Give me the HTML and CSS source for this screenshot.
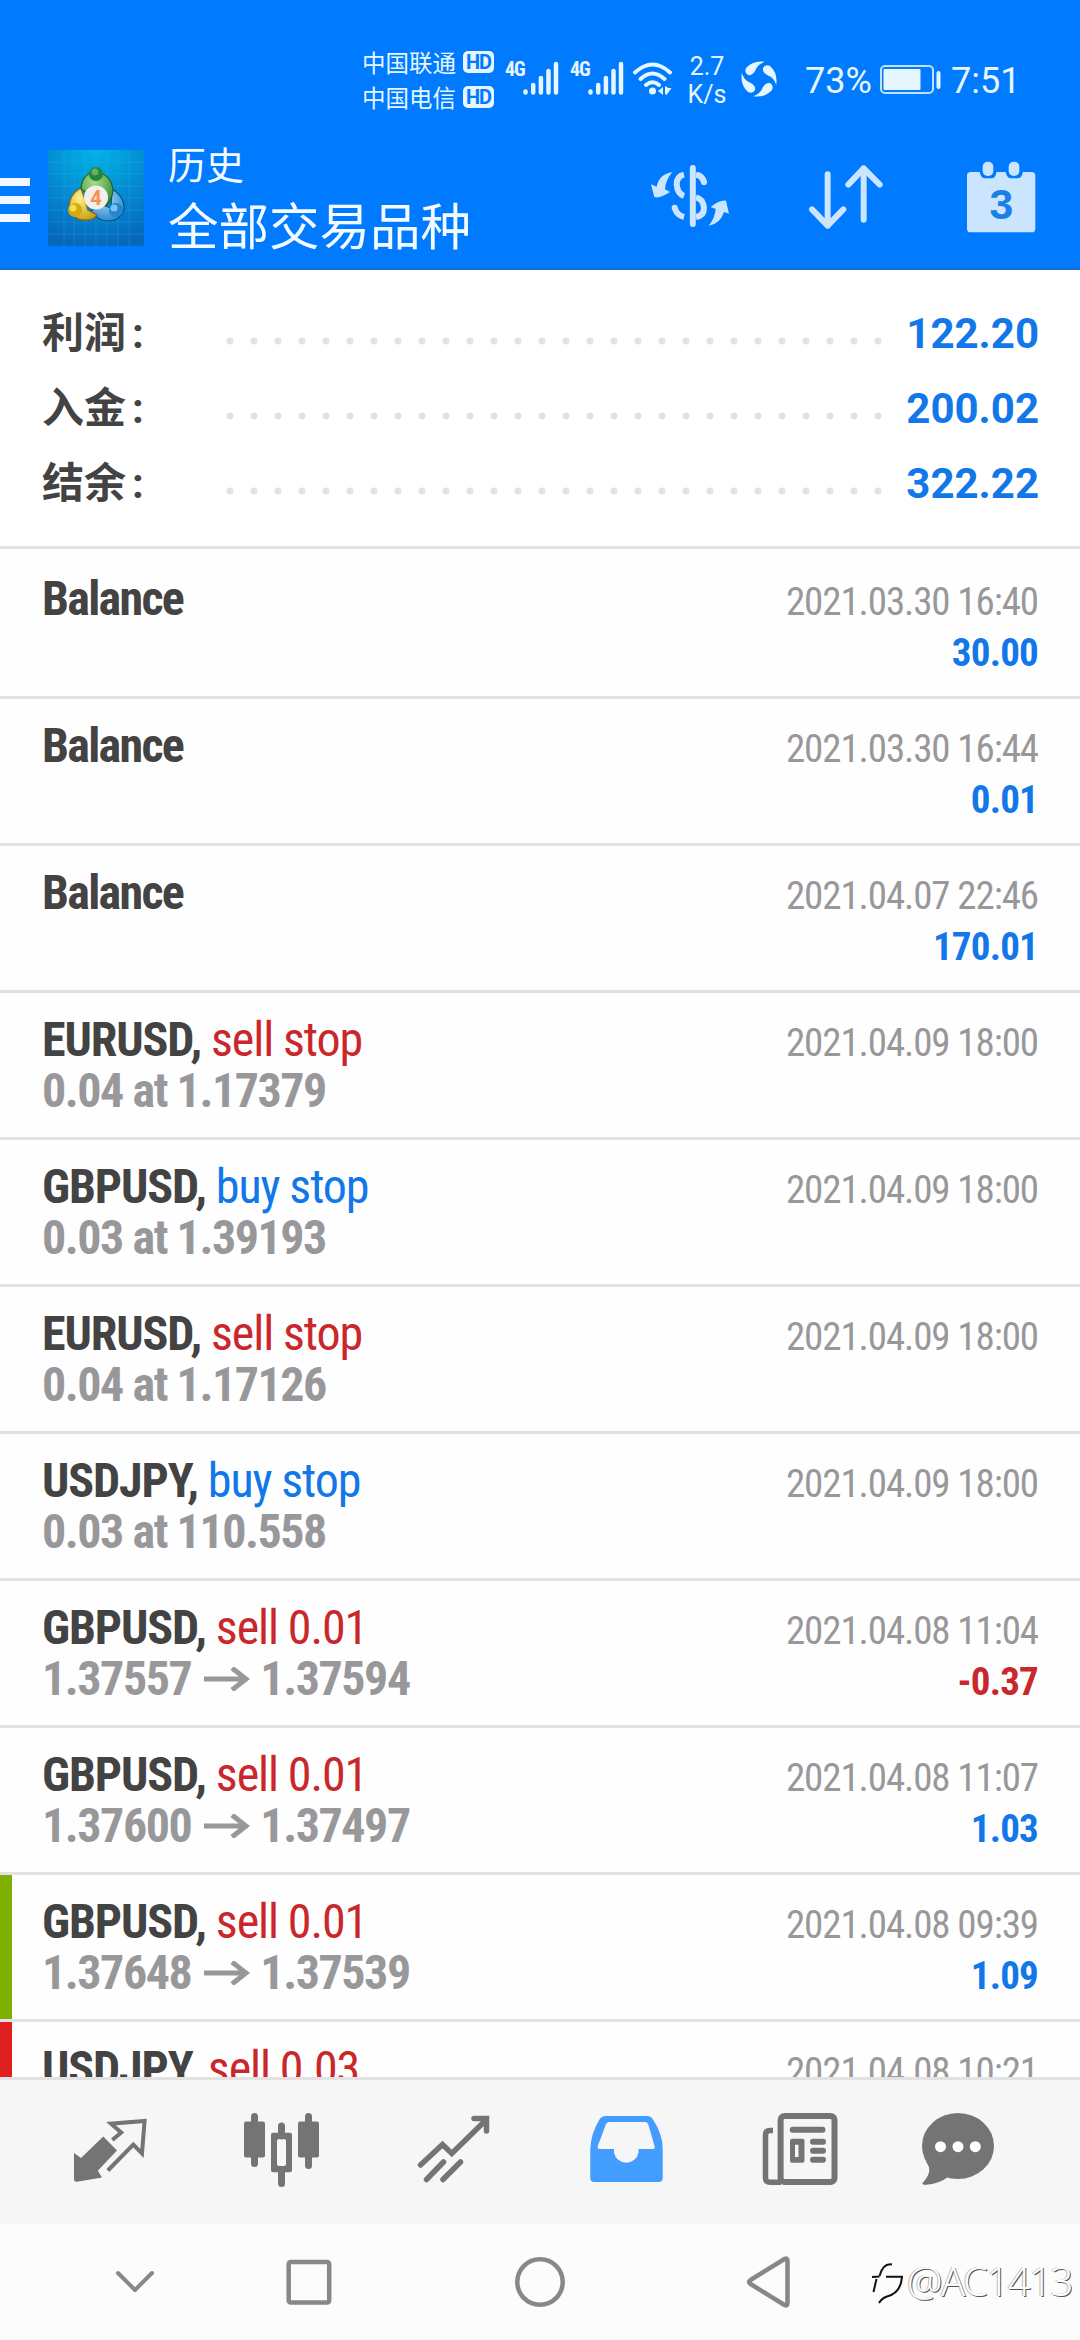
FILE: index.html
```html
<!DOCTYPE html>
<html lang="zh-CN">
<head>
<meta charset="utf-8">
<title>历史</title>
<link rel="stylesheet" href="styles.css">
</head>
<body>
<div class="screen">
  <div class="status">
    <div class="carriers">
      <div class="carrier"><span>中国联通</span><b class="hd">HD</b></div>
      <div class="carrier"><span>中国电信</span><b class="hd">HD</b></div>
    </div>
    <div class="signal"><b>4G</b><svg width="36" height="34" viewBox="0 0 36 34"><path d="M2.500 30.500v1M10.200 24v7.500M17.900 17v14.500M25.500 10v21.500M33 3v28.500"/></svg></div>
    <div class="signal"><b>4G</b><svg width="36" height="34" viewBox="0 0 36 34"><path d="M2.500 30.500v1M10.200 24v7.500M17.900 17v14.500M25.500 10v21.500M33 3v28.500"/></svg></div>
    <svg class="wifi" width="42" height="36" viewBox="0 0 42 36"><g fill="none" stroke="#e6f6ff" stroke-width="4" stroke-linecap="round"><path d="M3 11.500Q20.500-4.500 38 11.500M8.500 18Q20.500 7 32.500 18M14 24Q20.500 18.500 27 24"/></g><circle cx="20.500" cy="30" r="3.500"/><path d="M26 30l5-4v8zM33 25v8l1.500 1 5-7h-3z"/></svg>
    <div class="rate"><span>2.7</span><span>K/s</span></div>
    <svg class="swirl" width="36" height="36" viewBox="0 0 36 36"><path id="blade" d="M5 7Q12-1 24 .8Q17 3 15 8Q12 15 7 14Q3 12 5 7z"/><use href="#blade" transform="rotate(90 18 18)"/><use href="#blade" transform="rotate(180 18 18)"/><use href="#blade" transform="rotate(270 18 18)"/></svg>
    <span class="pct">73%</span>
    <svg class="battery" width="61" height="30" viewBox="0 0 61 30"><rect x="1" y="1" width="52" height="27" rx="4" fill="none" stroke="#bfe2ff" stroke-width="2"/><rect x="3.500" y="4" width="37" height="21" rx="1"/><rect x="56.500" y="6" width="4" height="18" rx="2"/></svg>
    <span class="time">7:51</span>
  </div>

  <div class="appbar">
    <div class="burger"><i></i><i></i><i></i></div>
    <svg class="logo" width="96" height="96" viewBox="0 0 96 96">
      <defs>
        <radialGradient id="bg" cx=".5" cy="0" r="1"><stop offset="0" stop-color="#00b4e8"/><stop offset="1" stop-color="#0668bd"/></radialGradient>
        <radialGradient id="gr" cx=".4" cy=".3" r=".8"><stop offset="0" stop-color="#a6dc8c"/><stop offset="1" stop-color="#2b8a2c"/></radialGradient>
        <radialGradient id="ye" cx=".4" cy=".3" r=".8"><stop offset="0" stop-color="#fff08a"/><stop offset="1" stop-color="#c49a10"/></radialGradient>
        <radialGradient id="bl" cx=".4" cy=".3" r=".8"><stop offset="0" stop-color="#a8dcfa"/><stop offset="1" stop-color="#1b7fc8"/></radialGradient>
      </defs>
      <rect width="96" height="96" fill="url(#bg)"/>
      <path d="M0 12h96M0 24h96M0 36h96M0 48h96M0 60h96M0 72h96M0 84h96M16 0v96M26 0v96M37 0v96M48 0v96M59 0v96M70 0v96M81 0v96" stroke="#48b8ee" stroke-opacity=".22"/>
      <g stroke-width="1.200">
        <path d="M64 39Q77 47 76 60Q72 71 60 71Q50 71 43 61L52 54L63 58z" fill="url(#bl)" stroke="#0a4f86"/>
        <path d="M33 38Q21 44 21 59Q26 71 38 70Q46 70 49 65L40 60L37 50z" fill="url(#ye)" stroke="#806a10"/>
        <path d="M33 39Q34 23 48 22Q63 24 65 40Q64 50 58 56L57 42L48 38L39 43z" fill="url(#gr)" stroke="#1f6424"/>
      </g>
      <circle cx="48" cy="24" r="7" fill="#258636"/><circle cx="47" cy="22" r="3.500" fill="#64b060"/>
      <circle cx="27" cy="60" r="7" fill="#d4a80e"/><circle cx="25" cy="58" r="3.500" fill="#f2dc50"/>
      <circle cx="68" cy="60" r="7" fill="#2386cf"/><circle cx="66" cy="58" r="3.500" fill="#7cc2f2"/>
      <circle cx="48" cy="47.500" r="12" fill="#f3eeec"/>
      <text x="48" y="54.500" text-anchor="middle" class="logo-num">4</text>
    </svg>
    <div class="titles"><div class="sub">历史</div><div class="main">全部交易品种</div></div>
    <svg class="act" width="80" height="66" viewBox="90 130 240 198">
      <path d="M218.500 145v168" class="ln"/>
      <path d="M192 165Q170 170 170 194Q172 222 192 229M164 264Q170 286 192 292M228 292Q252 288 252 265Q250 238 228 233M228 165Q248 168 252 188" class="ln flat"/>
      <circle cx="164" cy="264" r="9"/><circle cx="252" cy="188" r="9"/>
      <path d="M157 158Q118 162 110 201L93 194L103 232Q118 238 150 217L135 209Q137 180 157 158zM266 318Q302 312 312 277L327 282L318 243Q300 240 272 262L287 268Q285 295 266 318z"/>
    </svg>
    <svg class="act" width="76" height="66" viewBox="565 130 228 198"><path d="M624 164v154M577 269l47 49 47-49M732 300V146M686 195l46-49 48 49" class="ln"/></svg>
    <svg class="act" width="70" height="72" viewBox="1041 122 210 216">
      <path d="M1055 155H1082Q1086 174 1098 174H1118Q1130 174 1132 155H1160Q1164 174 1176 174H1196Q1208 174 1212 155H1238Q1249 155 1249 166V325Q1249 336 1238 336H1055Q1044 336 1044 325V166Q1044 155 1055 155z"/>
      <rect x="1091" y="124" width="32" height="43" rx="15"/><rect x="1169" y="124" width="32" height="43" rx="15"/>
      <text x="1147" y="297" text-anchor="middle" class="cal-num">3</text>
    </svg>
  </div>

  <div class="summary">
    <div class="sum"><span class="label">利润<span class="colon">:</span></span><span class="dots"></span><span class="val">122.20</span></div>
    <div class="sum"><span class="label">入金<span class="colon">:</span></span><span class="dots"></span><span class="val">200.02</span></div>
    <div class="sum"><span class="label">结余<span class="colon">:</span></span><span class="dots"></span><span class="val">322.22</span></div>
  </div>

  <div class="list">
    <div class="row"><div class="l"><div><b class="bal">Balance</b></div></div><div class="r"><div>2021.03.30 16:40</div><div class="amt">30.00</div></div></div>
    <div class="row"><div class="l"><div><b class="bal">Balance</b></div></div><div class="r"><div>2021.03.30 16:44</div><div class="amt">0.01</div></div></div>
    <div class="row"><div class="l"><div><b class="bal">Balance</b></div></div><div class="r"><div>2021.04.07 22:46</div><div class="amt">170.01</div></div></div>
    <div class="row"><div class="l"><div><b>EURUSD,</b> <span class="sell">sell stop</span></div><div class="px">0.04 at 1.17379</div></div><div class="r"><div>2021.04.09 18:00</div></div></div>
    <div class="row"><div class="l"><div><b>GBPUSD,</b> <span class="buy">buy stop</span></div><div class="px">0.03 at 1.39193</div></div><div class="r"><div>2021.04.09 18:00</div></div></div>
    <div class="row"><div class="l"><div><b>EURUSD,</b> <span class="sell">sell stop</span></div><div class="px">0.04 at 1.17126</div></div><div class="r"><div>2021.04.09 18:00</div></div></div>
    <div class="row"><div class="l"><div><b>USDJPY,</b> <span class="buy">buy stop</span></div><div class="px">0.03 at 110.558</div></div><div class="r"><div>2021.04.09 18:00</div></div></div>
    <div class="row"><div class="l"><div><b>GBPUSD,</b> <span class="sell">sell 0.01</span></div><div class="px">1.37557<svg class="arrow" width="46" height="24" viewBox="0 0 46 24"><path d="M0 12h41M28 1l14 11-14 11"/></svg>1.37594</div></div><div class="r"><div>2021.04.08 11:04</div><div class="amt neg">-0.37</div></div></div>
    <div class="row"><div class="l"><div><b>GBPUSD,</b> <span class="sell">sell 0.01</span></div><div class="px">1.37600<svg class="arrow" width="46" height="24" viewBox="0 0 46 24"><path d="M0 12h41M28 1l14 11-14 11"/></svg>1.37497</div></div><div class="r"><div>2021.04.08 11:07</div><div class="amt">1.03</div></div></div>
    <div class="row tp"><div class="l"><div><b>GBPUSD,</b> <span class="sell">sell 0.01</span></div><div class="px">1.37648<svg class="arrow" width="46" height="24" viewBox="0 0 46 24"><path d="M0 12h41M28 1l14 11-14 11"/></svg>1.37539</div></div><div class="r"><div>2021.04.08 09:39</div><div class="amt">1.09</div></div></div>
    <div class="row sl"><div class="l"><div><b>USDJPY,</b> <span class="sell">sell 0.03</span></div></div><div class="r"><div>2021.04.08 10:21</div></div></div>
  </div>

  <div class="tabs">
    <svg viewBox="24 0 172 144"><path d="M103.300 56.500L117 70.500L97.800 90.700L102 97.500L77 101.700Q74 102 74 99V73L81 78z"/><path d="M112.300 60L121.200 52.500L111 43.700L144.600 41L142 73.500L133.300 64.500L107.800 90.500" class="st" stroke-width="4"/></svg>
    <svg viewBox="196 0 172 144"><path d="M254.500 36.500v47M281.500 46v10M281.500 90v13.500M308.500 36.500v49" class="st" stroke-width="7" stroke-linecap="round"/><rect x="244" y="41.500" width="21" height="36" rx="2"/><rect x="298" y="41.500" width="21" height="36" rx="2"/><path fill-rule="evenodd" d="M273 52.700h17q2 0 2 2v35.500q0 2-2 2h-17q-2 0-2-2V54.700q0-2 2-2zM279 59q-2 0-2 2v23q0 2 2 2h5q2 0 2-2V61q0-2-2-2z"/></svg>
    <svg viewBox="368 0 172 144"><path d="M420.500 85L442.500 64.500L451.800 73.500L486 40M474 38.500H486.500V51M426.500 99.500L443.500 82M443 99.500L460.500 82" class="st" stroke-width="5.500" stroke-linecap="round"/></svg>
    <svg viewBox="540 0 172 144"><path fill="#429dff" fill-rule="evenodd" d="M606 36H647Q651 36 653 39.500Q662.700 54 662.700 69V98Q662.700 102 658.500 102H594.500Q590.300 102 590.300 98V69Q591 53 599.500 39.500Q601.500 36 606 36zM609.500 42Q607 42 606 44L598 65.500Q596.500 69 600 69H614V72.500A12.400 12 0 0 0 638.500 72.500V69H652.500Q655.500 69 654.500 66L648.500 45Q647.500 42 645 42z"/></svg>
    <svg viewBox="712 0 172 144"><rect x="780.600" y="36" width="53.900" height="66" rx="4" class="st" stroke-width="6"/><path d="M773 50.500H770Q765.500 50.500 765.500 55V98Q765.500 102.300 770 102.300H781" class="st" stroke-width="5.500"/><path d="M792.700 49.700h29.800M813 61.700h10M813 70.700h10M813 79.700h10" class="st" stroke-width="6" stroke-linecap="round"/><path fill-rule="evenodd" d="M792 58.700h10.500q2 0 2 2v20q0 2-2 2H792q-2 0-2-2v-20q0-2 2-2zM795 64.700V77h3.500V64.700z"/></svg>
    <svg viewBox="875 0 172 144"><ellipse cx="958" cy="66" rx="36" ry="33"/><path d="M926 82Q934 91 922.500 103Q922 105 926 104.700Q939 104 948 97L958 90z"/><g fill="#fff"><circle cx="940.500" cy="66.700" r="5.500"/><circle cx="958" cy="66.700" r="5.500"/><circle cx="975.300" cy="66.700" r="5.500"/></g></svg>
  </div>

  <div class="sysnav">
    <svg viewBox="54 0 140 116" class="hide"><path d="M118 49L135 66L152 49" stroke-width="4"/></svg>
    <svg viewBox="194 0 231 116"><rect x="288.700" y="37.900" width="40.500" height="40.500" rx="2"/></svg>
    <svg viewBox="425 0 231 116"><circle cx="540" cy="58" r="22.700"/></svg>
    <svg viewBox="656 0 231 116"><path d="M787.500 37V79Q787.500 82.500 784.500 81L750.500 60Q747.500 58 750.500 56L784.500 35Q787.500 33.500 787.500 37z"/></svg>
    <div class="mark"><svg width="35" height="48" viewBox="0 0 35 48"><path d="M22 6.500Q13 5 9.500 18M9.500 18.500L2 19M6.500 21L3.500 34M16 18.700H32Q31 35 17 38.500Q12 40 9 45" fill="none" stroke="#111" stroke-width="2"/></svg><span>@AC1413</span></div>
  </div>
</div>
</body>
</html>
```
FILE: styles.css
```css
* { box-sizing: border-box; }
body { margin: 0; background: #fff; font-family: Roboto, "Noto Sans CJK SC", sans-serif; }
svg { display: block; flex: none; }
.screen { width: 1080px; height: 2340px; display: flex; flex-direction: column; overflow: hidden; }

.status { height: 120px; background: #007aff; color: #e6f6ff; fill: #e6f6ff; display: flex; align-items: flex-start; padding-left: 362px; white-space: nowrap; }
.carriers { padding-top: 44px; width: 143px; }
.carrier { display: flex; align-items: center; height: 35px; font-size: 23.500px; gap: 7px; }
.hd { width: 31px; height: 22px; border-radius: 5px; background: #e6f6ff; color: #007aff; font-size: 20px; line-height: 22px; text-align: center; letter-spacing: -1px; }
.signal { display: flex; width: 65px; padding-top: 61px; }
.signal b { width: 18px; font-size: 20px; line-height: 17px; font-family: "Roboto Condensed", Roboto, sans-serif; font-stretch: 75%; letter-spacing: -1px; }
.signal svg { fill: none; stroke: #e6f6ff; stroke-width: 4.500; stroke-linecap: round; }
.wifi { margin-top: 61px; margin-left: -3px; }
.rate { width: 50px; padding-top: 53px; margin-left: 8px; display: flex; flex-direction: column; align-items: center; font-size: 25px; line-height: 28px; }
.swirl { margin-top: 61px; margin-left: 9px; }
.pct { margin: 60px 0 0 28px; width: 75px; font-size: 36px; line-height: 42px; }
.battery { margin-top: 65px; }
.time { margin: 60px 0 0 10px; font-size: 36px; line-height: 42px; }

.appbar { height: 150px; background: #007aff; border-bottom: 3px solid #1070d8; display: flex; color: #f4fbff; fill: #cce5ff; }
.burger { width: 30px; padding-top: 58px; display: flex; flex-direction: column; gap: 10px; }
.burger i { height: 8px; background: #f0f8ff; }
.logo { margin: 30px 24px 0 18px; }
.logo-num { font: bold 20px Roboto, sans-serif; fill: #f39150; }
.titles { width: 482px; padding-top: 19px; white-space: nowrap; }
.sub { font-size: 38px; line-height: 54px; }
.main { font-size: 50.500px; line-height: 70px; }
.act { margin-top: 43px; }
.act + .act { margin-left: 78px; }
.act + .act + .act { margin: 41px 0 0 82px; }
.ln { fill: none; stroke: #cce5ff; stroke-width: 18; stroke-linecap: round; stroke-linejoin: round; }
.flat { stroke-linecap: butt; }
.cal-num { font: bold 128px "Liberation Sans", sans-serif; fill: #1a80e8; }

.summary { height: 276px; padding: 26px 41px 0 42px; }
.sum { display: flex; height: 75px; font-size: 42px; font-weight: 700; line-height: 75px; }
.label { width: 184px; color: #434343; }
.colon { margin-left: 6px; }
.dots { width: 672px; background: radial-gradient(circle at 4px 45px, #e2e2e2 3px, transparent 4px) 0 0 / 24px 75px repeat-x; }
.val { flex: 1; text-align: right; color: #1277e8; }

.list { height: 1534px; border-bottom: 3px solid #e2e2e2; border-top: 3px solid #e2e2e2; padding-top: 3px; overflow: hidden; font-family: "Roboto Condensed", Roboto, sans-serif; font-stretch: 75%; white-space: nowrap; background: #fefefe; }
.row { height: 147px; border-bottom: 3px solid #e2e2e2; padding: 0 42px; display: flex; justify-content: space-between; }
.tp { background: linear-gradient(#80b000, #80b000) 0 0 / 12px 144px no-repeat; }
.sl { background: linear-gradient(#e02020, #e02020) 0 0 / 12px 144px no-repeat; }
.l { padding-top: 21px; font-size: 48px; line-height: 51px; color: #434343; letter-spacing: -1.100px; }
.bal { letter-spacing: -1.700px; }
.r { padding-top: 25px; font-size: 39px; line-height: 51px; color: #98989a; text-align: right; letter-spacing: -1.100px; }
.amt { font-weight: 700; color: #1277e8; letter-spacing: -.800px; }
.neg, .sell { color: #c9272b; }
.amt.neg { color: #c9272b; }
.buy { color: #1277e8; }
.px { display: flex; align-items: center; font-weight: 700; color: #98989a; letter-spacing: -1.450px; }
.arrow { margin: 0 10px 0 13px; fill: none; stroke: #98989a; stroke-width: 5; }

.tabs { height: 144px; background: #f6f6f6; display: flex; padding-left: 24px; fill: #747474; }
.tabs svg { width: 172px; height: 144px; }
.tabs svg:last-child { margin-left: -9px; }
.st { fill: none; stroke: #747474; }

.sysnav { position: relative; height: 116px; background: #fcfcfc; display: flex; padding-left: 54px; }
.sysnav > svg { width: 231px; height: 116px; fill: none; stroke: #888; stroke-width: 4.500; stroke-linecap: round; stroke-linejoin: round; }
.sysnav > .hide { width: 140px; }
.mark { position: absolute; left: 870px; top: 34px; display: flex; align-items: flex-start; gap: 2px; font: 300 40px/46px "Noto Sans", sans-serif; letter-spacing: -1.500px; color: #fdfdfd; text-shadow: 1px 1px 0 #555, -1px 0 0 #bbb; }
```
